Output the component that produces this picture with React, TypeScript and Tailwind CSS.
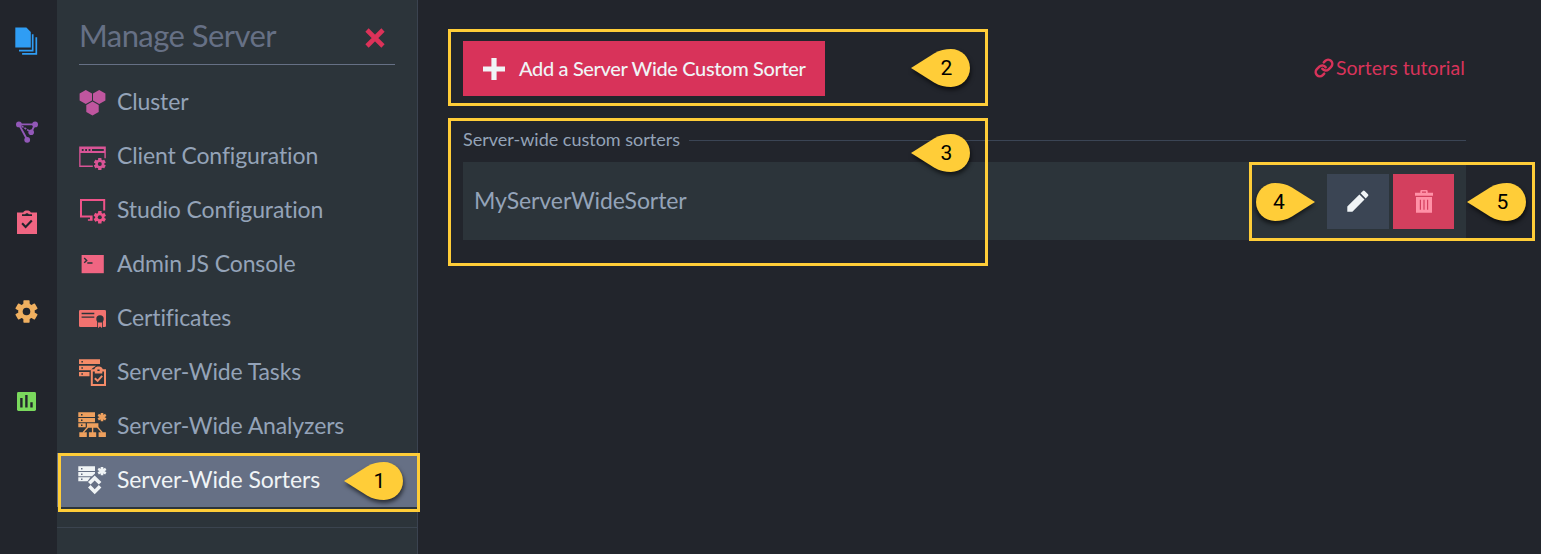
import React from 'react';

type IconProps = { children: React.ReactNode; className?: string };

function MenuIcon({ children, className = '' }: IconProps) {
  return (
    <svg viewBox="0 0 28 28" className={`h-7 w-7 shrink-0 overflow-visible ${className}`} fill="currentColor">
      {children}
    </svg>
  );
}

type GearProps = { x: number; y: number; r: number; hole: number; holeClass?: string };

function Gear({ x, y, r, hole, holeClass = 'fill-[#2c343a]' }: GearProps) {
  return (
    <g transform={`translate(${x} ${y})`}>
      {[0, 60, 120].map((a) => (
        <rect key={a} x={-r * 0.28} y={-r} width={r * 0.56} height={r * 2} rx={r * 0.06} transform={`rotate(${a})`} />
      ))}
      <circle r={r * 0.74} />
      <circle r={hole} className={holeClass} />
    </g>
  );
}

function Asterisk() {
  return (
    <path d="M24 .9V9.3M20.2 2.9L27.8 7.3M20.2 7.3L27.8 2.9" stroke="currentColor" strokeWidth="2.6" />
  );
}

function ServerBars({ hole }: { hole: string }) {
  return (
    <>
      <path d="M.3 .3H17V4.9H.3ZM.3 6H17V10.2H.3ZM.3 11.3H7.7V15.2H.3Z" />
      <path className={hole} d="M3 2h1.5v1.5H3ZM3 7.4h1.5v1.5H3ZM3 12.5h1.5V14H3Z" />
    </>
  );
}

const hex = (x: number, y: number) =>
  `M${x} ${y - 7}L${x + 6.2} ${y - 3.5}V${y + 3.5}L${x} ${y + 7}L${x - 6.2} ${y + 3.5}V${y - 3.5}Z`;

const items = [
  {
    label: 'Cluster',
    icon: (
      <MenuIcon className="text-[#bf569f]">
        <path d={`${hex(7.8, 9)}${hex(21.2, 9)}${hex(14.5, 20.6)}`} />
      </MenuIcon>
    ),
  },
  {
    label: 'Client Configuration',
    icon: (
      <MenuIcon className="text-[#d95496]">
        <path fillRule="evenodd" d="M1.2 4.4H27.8V16.2H26.4V11H2.5V23.6H14.8V25H1.2ZM3.8 6.9V8.9H5.6V6.9ZM7.2 6.9V8.9H9V6.9ZM10.6 6.9V8.9H12.4V6.9ZM14 6.9V8.9H25.8V6.9Z" />
        <Gear x={21.8} y={22} r={6} hole={2} />
      </MenuIcon>
    ),
  },
  {
    label: 'Studio Configuration',
    icon: (
      <MenuIcon className="text-[#ee5389]">
        <path d="M2 3H27.2V14.6H25.2V5H4V19.4H14.6V24.8H9.9V23.3H12V21.5H2Z" />
        <Gear x={21.8} y={21.3} r={6.2} hole={2} />
      </MenuIcon>
    ),
  },
  {
    label: 'Admin JS Console',
    icon: (
      <MenuIcon className="text-[#f06582]">
        <path d="M3.6 5H25.8V23.2H3.6Z" />
        <path d="M6.2 8L8.7 10.4L6.2 12.8M9.3 13H14.5" fill="none" className="stroke-[#2c343a]" strokeWidth="1.4" />
      </MenuIcon>
    ),
  },
  {
    label: 'Certificates',
    icon: (
      <MenuIcon className="text-[#f2726f]">
        <rect x="1" y="6" width="27" height="17" rx="1.3" />
        <path d="M3.6 9.5H16.3M3.6 13.1H16.3" className="stroke-[#2c343a]" strokeWidth="1.3" />
        <circle cx="22" cy="14.9" r="3.7" className="fill-[#2c343a]" />
        <path d="M19.2 17H24.8V25H19.2Z" className="fill-[#2c343a]" />
        <path d="M20 18.4H24V24L22 22.5L20 24Z" />
      </MenuIcon>
    ),
  },
  {
    label: 'Server-Wide Tasks',
    icon: (
      <MenuIcon className="text-[#f48b68]">
        <path d="M1 1.3H22V5.9H1ZM1 7.8H18L14.5 10.2L12.5 12.2H1ZM1 14H11.5V18.2H1Z" />
        <path className="fill-[#2c343a]" d="M3.4 3h1.5v1.5H3.4ZM3.4 9.3h1.5v1.5H3.4ZM3.4 15.3h1.5v1.5H3.4Z" />
        <path fillRule="evenodd" d="M12.8 11.3H16.3C17 9 19 8.6 20.5 8.6S24 9 24.8 11.3H28V28H12.8ZM14.8 13.5V26H26V13.5H24.3V15.5H16.8V13.5ZM19.4 11.4V13H21.6V11.4Z" />
        <path d="M16.8 20.2L19.6 22.8L24.2 17.8" fill="none" stroke="currentColor" strokeWidth="1.9" />
      </MenuIcon>
    ),
  },
  {
    label: 'Server-Wide Analyzers',
    icon: (
      <MenuIcon className="text-[#eea05e]">
        <ServerBars hole="fill-[#2c343a]" />
        <path d="M8.9 11.3H20.4V15.8H8.9ZM1.3 20.3H8.8V25H1.3ZM10.9 20.3H18.2V25H10.9ZM20.6 20.3H27.9V25H20.6Z" />
        <path d="M10 15L5 20.6M14.6 15V21M19.3 15L24.3 20.6" stroke="currentColor" strokeWidth="1.4" />
        <Asterisk />
      </MenuIcon>
    ),
  },
  {
    label: 'Server-Wide Sorters',
    active: true,
    icon: (
      <MenuIcon className="text-[#f0f4f6]">
        <path d="M.3 .3H17V4.9H.3ZM.3 6H17V7.5L14 10.2H.3ZM.3 11.3H12.5L9.5 15.2H.3Z" />
        <path className="fill-[#667085]" d="M3 2h1.5v1.5H3ZM3 7.4h1.5v1.5H3ZM3 12.5h1.5V14H3Z" />
        <path d="M16.7 9.2L23.4 15.8L20.8 18.3L16.7 14.2L12.6 18.3L10 15.8ZM16.7 28L23.4 21.4L20.8 18.9L16.7 23L12.6 18.9L10 21.4Z" transform="translate(0 .2)" />
        <Asterisk />
      </MenuIcon>
    ),
  },
];

function Rail() {
  return (
    <nav className="flex w-[57px] shrink-0 flex-col items-center bg-[#22252c] pr-1">
      <div className="flex h-[86px] items-end justify-center pb-[31px]">
        <svg className="h-7 w-[23px]" viewBox="0 0 23 28" fill="#2f9df4">
          <path d="M.3.5H11.4L15.8 4.9V20.6H.3Z" />
          <path d="M17.7 7.2V23.6H4M21.3 10.2V26.8H7.1" fill="none" stroke="#2f9df4" strokeWidth="1.7" />
        </svg>
      </div>
      <div className="flex h-[90px] items-center pt-px">
        <svg className="h-[22px] w-[22px]" viewBox="0 0 22 22" fill="#9258b8">
          <path d="M2.9 3.4H19.1L15.2 11.2M2.9 3.4L11.2 18.8" fill="none" stroke="#9258b8" strokeWidth="1.9" />
          <path d="M3 3.4L15.2 11.2" stroke="#9258b8" strokeWidth="1.6" strokeDasharray="2.2 1" />
          <circle cx="2.9" cy="3.4" r="2.9" /><circle cx="19.1" cy="3.4" r="2.9" />
          <circle cx="15.2" cy="11.2" r="2.8" /><circle cx="11.2" cy="18.8" r="2.9" />
        </svg>
      </div>
      <div className="flex h-[90px] items-center pt-px">
        <svg className="h-6 w-5" viewBox="0 0 20 24" fill="#f06582">
          <path d="M0 2.5H6.2C7 .8 8 .4 10 .4S13 .8 13.8 2.5H20V24H0Z" />
          <path d="M5 6V4.2H8.2C8.7 3.4 9.2 3.2 10 3.2S11.3 3.4 11.8 4.2H15V6Z" fill="#22252c" />
          <path d="M5.1 13.3L8.6 17L14.8 10.5" fill="none" stroke="#22252c" strokeWidth="2.1" />
        </svg>
      </div>
      <div className="flex h-[90px] items-center">
        <svg className="h-[23px] w-[23px] text-[#f0b060]" viewBox="0 0 23 23" fill="currentColor">
          <Gear x={11.5} y={11.5} r={11.2} hole={3.8} holeClass="fill-[#22252c]" />
        </svg>
      </div>
      <div className="flex h-[90px] items-center">
        <svg className="h-[19px] w-[19px]" viewBox="0 0 19 19">
          <rect width="19" height="19" rx="1.4" fill="#7ad95d" />
          <path d="M4.4 6V15.5M9.4 3V15.5M14.5 10.3V15.5" stroke="#22252c" strokeWidth="2.4" />
        </svg>
      </div>
    </nav>
  );
}

function Callout({ n, flip = false, className }: { n: number; flip?: boolean; className: string }) {
  return (
    <div className={`absolute flex h-[38px] w-[59px] items-center ${className}`}>
      <svg
        viewBox="0 0 59 38"
        className={`absolute inset-0 h-[38px] w-[59px] overflow-visible drop-shadow-[1px_3px_2px_rgba(0,0,0,0.6)] ${flip ? '-scale-x-100' : ''}`}
      >
        <path d="M0 19L23 4.5C29 1 34 0 40 0A19 19 0 0 1 40 38C34 38 29 37 23 33.5Z" fill="#ffcd38" />
      </svg>
      <span className={`relative w-full text-center font-['Roboto',sans-serif] text-[21px] leading-none text-black ${flip ? 'pr-[13px]' : 'pl-[12px]'}`}>
        {n}
      </span>
    </div>
  );
}

function Sidebar() {
  return (
    <aside className="flex w-[361px] shrink-0 flex-col border-r border-[#3b4350] bg-[#2c343a]">
      <header className="mr-[22px] ml-[22px] flex h-[65px] items-center justify-between border-b border-[#667085] pr-[10px] pb-[2px]">
        <h1 className="pt-[8px] text-[31px] leading-[38px] font-normal tracking-[-0.55px] whitespace-nowrap text-[#667085]">Manage Server</h1>
        <svg className="mt-[14px] h-5 w-5" viewBox="0 0 20 20">
          <path d="M2 2L18 18M18 2L2 18" stroke="#dc3259" strokeWidth="4.6" />
        </svg>
      </header>
      <ul className="mt-[10px]">
        {items.map((item) => (
          <li
            key={item.label}
            className={`flex h-[54px] items-center gap-[11px] pl-[21px] text-[23px] ${item.active ? 'bg-[#667085] text-[#f0f4f6]' : 'text-[#94a3b8]'}`}
          >
            {item.icon}
            <span className="pb-[2px] tracking-[-0.12px] whitespace-nowrap">{item.label}</span>
          </li>
        ))}
      </ul>
      <div className="mt-5 border-t border-[#3b444f]" />
    </aside>
  );
}

export default function App() {
  return (
    <div className="relative flex h-[554px] w-full overflow-hidden bg-[#22252c] font-['Lato',sans-serif]">
      <Rail />
      <Sidebar />
      <main className="flex flex-1 flex-col pt-[41px] pr-[75px] pl-[45px]">
        <div className="flex items-center justify-between">
          <button className="flex h-[55px] w-[362px] items-center gap-[14px] bg-[#d8335a] pl-5 text-[20px] text-[#f0f4f6]">
            <svg className="h-[22px] w-[22px]" viewBox="0 0 22 22" fill="currentColor">
              <path d="M8.4 0H13.6V8.6H22V13.6H13.6V22H8.4V13.6H0V8.6H8.4Z" />
            </svg>
            <span className="pb-[2px] font-medium tracking-[-0.35px] whitespace-nowrap">Add a Server Wide Custom Sorter</span>
          </button>
          <a className="flex items-center gap-[2px] pr-px pb-[2px] text-[19.5px] whitespace-nowrap text-[#d8335a]">
            <svg className="h-5 w-5" viewBox="0 0 24 24" fill="none" stroke="currentColor" strokeWidth="3" strokeLinecap="round">
              <path d="M10 13a5 5 0 0 0 7.54.54l3-3a5 5 0 0 0-7.07-7.07l-1.72 1.71" />
              <path d="M14 11a5 5 0 0 0-7.54-.54l-3 3a5 5 0 0 0 7.07 7.07l1.71-1.71" />
            </svg>
            <span className="tracking-[0.05px]">Sorters tutorial</span>
          </a>
        </div>
        <div className="mt-[32px] flex h-6 items-center gap-[9px] text-[18px] text-[#94a3b8]">
          <h2 className="pb-[2px] whitespace-nowrap">Server-wide custom sorters</h2>
          <div className="h-px flex-1 bg-[#3b4555]" />
        </div>
        <div className="mt-[10px] flex h-[78px] items-center gap-1 bg-[#2c343a] pr-3 pl-[11px]">
          <span className="flex-1 pb-[2px] text-[23px] tracking-[-0.08px] text-[#94a3b8]">MyServerWideSorter</span>
          <button className="flex h-[55px] w-[62px] items-center justify-center bg-[#3b4554]">
            <svg className="h-[22px] w-[22px]" viewBox="0 0 22 22" fill="#f0f4f6">
              <path d="M.3 16.6L12.4 4.5L17.5 9.6L5.4 21.7H.3ZM13.6 3.3L15.9 1Q16.8.1 17.7 1L21 4.3Q21.9 5.2 21 6.1L18.7 8.4Z" />
            </svg>
          </button>
          <button className="flex h-[55px] w-[61px] items-center justify-center bg-[#d33f5e]">
            <svg className="h-[23px] w-[18px]" viewBox="0 0 18 23" fill="#ff91a7">
              <path fillRule="evenodd" d="M0 2.8H5.3V1.3Q5.3 0 6.6 0H11.4Q12.7 0 12.7 1.3V2.8H18V5.8H0ZM7 1.6V2.8H11V1.6ZM1 7H17V22.7H1ZM4.8 9.7V19.7H6V9.7ZM8.4 9.7V19.7H9.6V9.7ZM12 9.7V19.7H13.2V9.7Z" />
            </svg>
          </button>
        </div>
      </main>

      <div className="absolute top-[453px] left-[58px] h-[59px] w-[362px] border-3 border-[#ffcd38]" />
      <div className="absolute top-[29px] left-[448px] h-[77px] w-[540px] border-3 border-[#ffcd38]" />
      <div className="absolute top-[118px] left-[448px] h-[148px] w-[540px] border-3 border-[#ffcd38]" />
      <div className="absolute top-[162px] left-[1249px] h-[79px] w-[286px] border-3 border-[#ffcd38]" />
      <Callout n={1} className="top-[462px] left-[344px]" />
      <Callout n={2} className="top-[49px] left-[911px]" />
      <Callout n={3} className="top-[134px] left-[911px]" />
      <Callout n={4} flip className="top-[183px] left-[1256px]" />
      <Callout n={5} className="top-[183px] left-[1467px]" />
    </div>
  );
}
